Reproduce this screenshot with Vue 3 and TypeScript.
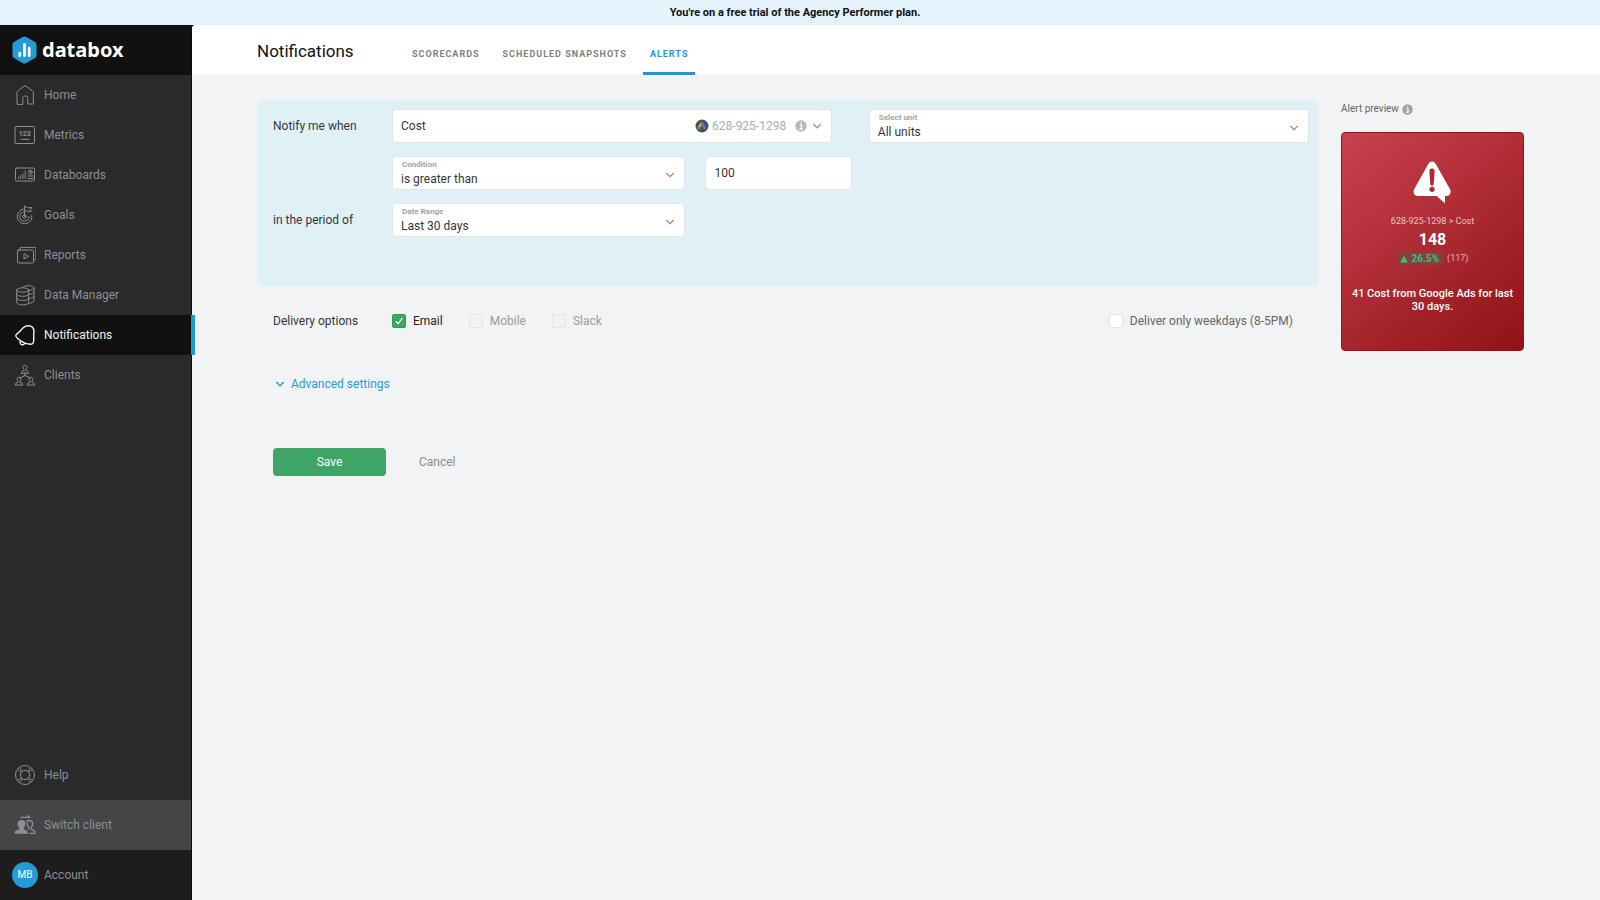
<script setup lang="ts">
import { ref } from 'vue'

interface NavItem {
  label: string
  icon: string
  active?: boolean
}

const navItems: NavItem[] = [
  { label: 'Home', icon: 'home' },
  { label: 'Metrics', icon: 'metrics' },
  { label: 'Databoards', icon: 'databoards' },
  { label: 'Goals', icon: 'goals' },
  { label: 'Reports', icon: 'reports' },
  { label: 'Data Manager', icon: 'data' },
  { label: 'Notifications', icon: 'bell', active: true },
  { label: 'Clients', icon: 'clients' },
]

const tabs = ['Scorecards', 'Scheduled snapshots', 'Alerts']
const activeTab = ref('Alerts')

const metric = ref('Cost')
const unit = ref('All units')
const condition = ref('is greater than')
const threshold = ref('100')
const range = ref('Last 30 days')
const weekdaysOnly = ref(false)

const channels = ref([
  { label: 'Email', checked: true, disabled: false },
  { label: 'Mobile', checked: false, disabled: true },
  { label: 'Slack', checked: false, disabled: true },
])
</script>

<template>
  <div class="app">
    <div class="banner">You're on a free trial of the Agency Performer plan.</div>

    <div class="shell">
      <aside class="sidebar">
        <a href="#" class="brand">
          <svg class="brand-mark" viewBox="0 0 26 28">
            <path d="M11.2 .9a3.6 3.6 0 0 1 3.6 0l8.7 5a3 3 0 0 1 1.5 2.6v11a3 3 0 0 1-1.5 2.6l-8.7 5a3.6 3.6 0 0 1-3.6 0l-8.7-5A3 3 0 0 1 1 19.5v-11a3 3 0 0 1 1.5-2.6z" fill="#259bd7" />
            <path d="M8.3 17v2.7M13 8.3v11.4M17.7 12v7.7" stroke="#fff" stroke-width="2.7" stroke-linecap="round" />
          </svg>
          <span>databox</span>
        </a>

        <nav class="nav">
          <a v-for="item in navItems" :key="item.label" href="#" class="nav-item" :class="{ active: item.active }">
            <svg class="icon" viewBox="0 0 22 22">
              <template v-if="item.icon === 'home'">
                <path d="M3 20V8.5a2 2 0 0 1 .7-1.500L10 2.2a1.6 1.6 0 0 1 2 0l6.500 4.800a2 2 0 0 1 .8 1.600V20h-5.500v-6.500a2 2 0 0 0-2-1.500h-1a2 2 0 0 0-2 1.500V20z" />
              </template>
              <template v-else-if="item.icon === 'metrics'">
                <rect x="1" y="2.5" width="19.5" height="17" rx="1.2" />
                <path d="M7 15.3h8" />
                <text x="10.7" y="12" text-anchor="middle" class="glyph">123</text>
              </template>
              <template v-else-if="item.icon === 'databoards'">
                <rect x="1.5" y="4" width="19" height="13" rx="1.2" />
                <path d="M4.5 14.5v-1.5M6.7 14.5v-3M8.9 14.5V10M11.2 14.5V7M14 12h5M14 14.5h5" />
                <circle cx="16.3" cy="8.3" r="2" /><path d="M16.3 6.3v2h2" />
              </template>
              <template v-else-if="item.icon === 'goals'">
                <path d="M9.5 5.1a7.4 7.4 0 1 0 8.4 6" />
                <path d="M9.5 8a4.6 4.6 0 1 0 5.5 4.5" />
                <circle cx="10.5" cy="12.5" r="1.8" />
                <path d="M10.5 12.5V2l3 1.8 4.5-.3-1.8 2 1.3 1.8-4 .2-3-1.5" />
              </template>
              <template v-else-if="item.icon === 'reports'">
                <rect x="3.5" y="6" width="16" height="13" rx="1" />
                <path d="M6 6V4.2a.8.8 0 0 1 .8-.8H21a.9.9 0 0 1 .9.9V15a.9.9 0 0 1-.9.9h-1.3M10 10v4.8l4.2-2.4z" />
              </template>
              <template v-else-if="item.icon === 'data'">
                <ellipse cx="8.7" cy="6" rx="6" ry="2.2" />
                <path d="M2.7 6v12.5c0 1.4 2.7 2.4 6 2.4s6-1 6-2.4V6M2.7 10c0 1.4 2.7 2.3 6 2.3s6-.9 6-2.3M2.7 14.2c0 1.4 2.7 2.3 6 2.3s6-.9 6-2.3" />
                <path d="M8.5 3.7c.5-1.2 2.8-2 5.5-2 3.3 0 6 1 6 2.3 0 1.3-2.3 2.2-5.3 2.3M20 4v13c0 1-2 2-5 2.3M14.7 10.3c3-.2 5.3-1 5.3-2.3M14.7 14.5c3-.2 5.3-1 5.3-2.3" />
              </template>
              <template v-else-if="item.icon === 'bell'">
                <path stroke-width="1.4" d="M9.2 3.8c2.2-2.6 7-2.8 9.3-.6 1.6 1.6 1.7 3.8 1.3 6.3-.4 3 .2 5.5-.2 8.2-.2 2-1.5 2.5-3.2 2.5-3-.1-6.2-.8-9.5-3-2.1-1.4-4-3.2-4.9-4.7-.6-1.2-.2-1.9.9-2.7 3-2 4-4 6.3-6zM6.3 17.4c-.6 1.9.3 3.2 1.9 3.4 1.2.1 2-.4 2.6-1.6" />
              </template>
              <template v-else>
                <path d="M11 8.5v3M5.5 14l5.5-2.5 5.5 2.5M7.3 9c.1-1.6.9-2 2.7-2.3V5.5C8.3 3 9.3 1.3 11 1.3s2.7 1.7 1 4.2v1.2c1.8.3 2.6.7 2.7 2.3z" />
                <path d="M1.3 20.7c.1-1.6.9-2 2.7-2.3v-1.2c-1.7-2.5-.7-3.9 1-3.9s2.7 1.4 1 3.9v1.2c1.8.3 2.6.7 2.7 2.3zM13.3 20.7c.1-1.6.9-2 2.7-2.3v-1.2c-1.7-2.5-.7-3.9 1-3.9s2.7 1.4 1 3.9v1.2c1.8.3 2.6.7 2.7 2.3z" />
              </template>
            </svg>
            <span>{{ item.label }}</span>
          </a>
        </nav>

        <a href="#" class="nav-item help">
          <svg class="icon" viewBox="0 0 22 22">
            <circle cx="11" cy="11" r="9.5" /><circle cx="11" cy="11" r="4.6" />
            <path d="M3.3 5.3l4 3M5.3 3.3l3 4M18.7 5.3l-4 3M16.7 3.3l-3 4M3.3 16.7l4-3M5.3 18.7l3-4M18.7 16.7l-4-3M16.7 18.7l-3-4" />
          </svg>
          <span>Help</span>
        </a>
        <a href="#" class="nav-item switch">
          <svg class="icon" viewBox="0 0 22 22">
            <path class="solid" d="M.8 19.8v-1.3c0-1.8 1.7-2.3 4.5-3.2v-1.5C2.8 11 2.8 6 7.500 6s4.700 5 2.300 7.800v1.500c2.700.9 3.900 1.400 3.900 3.200v1.300z" />
            <path stroke-width="1.3" d="M13 7.500c1.200-1.600 5.700-1.500 5.700 2.200 0 1.900-.7 3-1.500 4v1.600c2.700.9 3.800 1.300 3.800 3v1.100h-5.200M13 8.800c.2 2.300.7 3.700 1.700 4.900v1.500M7 3.300h8.500M13.500 1.700l2.200 1.600" />
          </svg>
          <span>Switch client</span>
        </a>
        <a href="#" class="nav-item account">
          <span class="avatar">MB</span>
          <span>Account</span>
        </a>
      </aside>

      <main class="main">
        <header class="topbar">
          <h1>Notifications</h1>
          <nav class="tabs">
            <a v-for="tab in tabs" :key="tab" href="#" class="tab" :class="{ active: tab === activeTab }" @click.prevent="activeTab = tab">{{ tab }}</a>
          </nav>
        </header>

        <div class="content">
          <form class="editor" @submit.prevent>
            <section class="rules">
              <div class="row">
                <label class="row-label" for="metric">Notify me when</label>
                <div class="fields">
                  <div class="field wide plain">
                    <select id="metric" v-model="metric"><option>Cost</option></select>
                    <span class="source">
                      <svg class="ads" viewBox="0 0 14 14">
                        <circle cx="7" cy="7" r="6.5" fill="#4c5158" />
                        <path d="M6.3 4.2l-2.5 4.5" stroke="#f4b811" stroke-width="2.3" stroke-linecap="round" />
                        <path d="M7 4.2l2.6 4.7" stroke="#3f7de8" stroke-width="2.8" stroke-linecap="round" />
                        <circle cx="4.1" cy="9" r="1.5" fill="#35a853" />
                      </svg>
                      <span class="source-id">628-925-1298</span>
                      <svg class="info" viewBox="0 0 12 12"><circle cx="6" cy="6" r="5.7" fill="#b8b8b8" /><path d="M4.8 5.2h1.7v3.7M4.5 9h3.2M5.5 2.9h1.2" stroke="#fff" stroke-width="1.3" fill="none" /></svg>
                      <svg class="chevron" viewBox="0 0 10 10"><path d="M1.3 3l3.7 3.8L8.7 3" /></svg>
                    </span>
                  </div>
                  <div class="field wide push">
                    <label for="unit">Select unit</label>
                    <select id="unit" v-model="unit"><option>All units</option></select>
                    <svg class="chevron" viewBox="0 0 10 10"><path d="M1.3 3l3.7 3.8L8.7 3" /></svg>
                  </div>
                </div>
              </div>
              <div class="row">
                <span class="row-label"></span>
                <div class="fields">
                  <div class="field medium">
                    <label for="condition">Condition</label>
                    <select id="condition" v-model="condition"><option>is greater than</option></select>
                    <svg class="chevron" viewBox="0 0 10 10"><path d="M1.3 3l3.7 3.8L8.7 3" /></svg>
                  </div>
                  <div class="field small plain">
                    <input v-model="threshold" type="text" aria-label="Value" />
                  </div>
                </div>
              </div>
              <div class="row">
                <label class="row-label" for="range">in the period of</label>
                <div class="fields">
                  <div class="field medium">
                    <label for="range">Date Range</label>
                    <select id="range" v-model="range"><option>Last 30 days</option></select>
                    <svg class="chevron" viewBox="0 0 10 10"><path d="M1.3 3l3.7 3.8L8.7 3" /></svg>
                  </div>
                </div>
              </div>
            </section>

            <div class="delivery">
              <span class="row-label">Delivery options</span>
              <label v-for="c in channels" :key="c.label" class="check" :class="{ off: c.disabled }">
                <span class="box">
                  <input v-model="c.checked" type="checkbox" :disabled="c.disabled" />
                  <svg v-if="c.checked" viewBox="0 0 14 14"><path d="M3.8 7.3l2.3 2.5 4.3-5.6" /></svg>
                </span>
                {{ c.label }}
              </label>
              <label class="check weekdays">
                <span class="box">
                  <input v-model="weekdaysOnly" type="checkbox" />
                  <svg v-if="weekdaysOnly" viewBox="0 0 14 14"><path d="M3.8 7.3l2.3 2.5 4.3-5.6" /></svg>
                </span>
                Deliver only weekdays (8-5PM)
              </label>
            </div>

            <button type="button" class="advanced">
              <svg class="chevron" viewBox="0 0 10 10"><path d="M1.3 3l3.7 3.8L8.7 3" /></svg>
              Advanced settings
            </button>

            <div class="actions">
              <button type="submit" class="save">Save</button>
              <button type="button" class="cancel">Cancel</button>
            </div>
          </form>

          <aside class="preview">
            <div class="preview-title">
              Alert preview
              <svg class="info" viewBox="0 0 12 12"><circle cx="6" cy="6" r="5.7" fill="#a2a2a3" /><path d="M4.8 5.2h1.7v3.7M4.5 9h3.2M5.5 2.9h1.2" stroke="#fff" stroke-width="1.3" fill="none" /></svg>
            </div>
            <div class="card">
              <svg class="warning" viewBox="0 0 40 44">
                <path d="M15.8 3.3a4.200 4.200 0 0 1 7.400 0L38 29.500c1.700 3-.2 6.800-3.500 6.800h-1.700V44l-8.500-7.700H4.700C1.400 36.300-.5 32.500 1.200 29.500z" fill="#fff" />
                <path d="M16.800 10.800a2.700 2.700 0 0 1 5.400 0l-.9 13.200a1.800 1.800 0 0 1-3.600 0z" fill="#ae2a33" />
                <circle cx="19.5" cy="29.5" r="2.700" fill="#ae2a33" />
              </svg>
              <div class="metric-name">628-925-1298 &gt; Cost</div>
              <div class="metric-value">148</div>
              <div class="trend">
                <span class="delta"><svg viewBox="0 0 8 8"><path d="M4 .5L7.7 7.5H.3z" /></svg>26.5%</span>
                <span class="previous">(117)</span>
              </div>
              <p>41 Cost from Google Ads for last 30 days.</p>
            </div>
          </aside>
        </div>
      </main>
    </div>
  </div>
</template>

<style>
body {
  margin: 0;
  background: #f2f3f5;
}
</style>

<style scoped>
.app {
  display: flex;
  flex-direction: column;
  min-height: 100vh;
  font: 12px/16px Roboto, "Liberation Sans", sans-serif;
  color: #333639;
  background: #f2f3f5;
}
.app *,
.app *::before {
  box-sizing: border-box;
}
a {
  color: inherit;
  text-decoration: none;
}
button,
input,
select {
  margin: 0;
  font: inherit;
  color: inherit;
  border: 0;
  background: none;
}
button {
  cursor: pointer;
}
svg {
  flex: none;
}
.banner {
  height: 25px;
  padding-right: 10px;
  background: #e4f3fb;
  color: #111;
  font-size: 11px;
  font-weight: 700;
  line-height: 25px;
  text-align: center;
}
.shell {
  display: flex;
  flex: 1;
  background: #111;
}

.sidebar {
  display: flex;
  flex-direction: column;
  flex: none;
  width: 192px;
  background: #2a2a2a;
  border-right: 1px solid #0b0b0b;
  color: #8c8f96;
}
.brand {
  display: flex;
  align-items: center;
  gap: 4px;
  height: 50px;
  padding-left: 11px;
  background: #111;
  color: #fff;
  font: 700 20px/24px "Noto Sans", sans-serif;
}
.brand-mark {
  width: 27px;
  height: 28px;
}
.nav {
  flex: 1;
}
.nav-item {
  display: flex;
  align-items: center;
  gap: 8px;
  height: 40px;
  padding-left: 14px;
}
.nav-item.active {
  width: 195px;
  position: relative;
  background: #111;
  border-right: 4px solid #1b98d8;
  color: #f2f2f2;
}
.icon {
  width: 22px;
  height: 22px;
  fill: none;
  stroke: currentColor;
  stroke-width: 1;
  stroke-linejoin: round;
  stroke-linecap: round;
}
.glyph {
  fill: currentColor;
  stroke: none;
  font-size: 7px;
  font-weight: 700;
}
.solid {
  fill: currentColor;
  stroke: none;
}
.help {
  margin-bottom: 5px;
}
.switch {
  height: 50px;
  background: #444547;
}
.account {
  height: 50px;
  gap: 6px;
  padding-left: 12px;
  background: #1d1d1d;
}
.avatar {
  width: 26px;
  height: 26px;
  border-radius: 50%;
  background: #259bd7;
  color: #fff;
  font-size: 10px;
  line-height: 26px;
  text-align: center;
}

.main {
  flex: 1;
  min-width: 0;
  background: #f2f3f5;
  border-top-left-radius: 4px;
}
.topbar {
  display: flex;
  height: 50px;
  padding-left: 65px;
  background: #fff;
  border-top-left-radius: 4px;
}
h1 {
  width: 140px;
  margin: 0;
  color: #111;
  font-size: 17px;
  font-weight: 400;
  line-height: 53px;
  white-space: nowrap;
}
.tabs {
  display: flex;
  gap: 9px;
  padding-left: 8px;
}
.tab {
  height: 50px;
  padding: 0 7px;
  border-bottom: 3px solid transparent;
  color: #808080;
  font-size: 9px;
  font-weight: 700;
  line-height: 58px;
  letter-spacing: 1px;
  text-transform: uppercase;
}
.tab.active {
  color: #1b98d8;
  border-color: #1b98d8;
}

.content {
  display: flex;
  gap: 23px;
  padding: 25px 76px 40px 65px;
}
.editor {
  flex: 1;
  min-width: 0;
}
.rules {
  display: flex;
  flex-direction: column;
  gap: 13px;
  padding: 9px 9px 49px 16px;
  border-radius: 4px;
  background: #e0f1f6;
}
.row {
  display: flex;
  align-items: center;
}
.row-label {
  flex: none;
  width: 119px;
}
.fields {
  display: flex;
  flex: 1;
  gap: 20px;
}
.field {
  display: grid;
  grid-template: 32px / 1fr;
  overflow: hidden;
  border: 1px solid #e3e6e8;
  border-radius: 4px;
  background: #fff;
  height: 34px;
}
.field > * {
  grid-area: 1 / 1;
}
.wide {
  width: 48%;
}
.push {
  margin-left: auto;
}
.medium {
  width: 32%;
}
.small {
  width: 16%;
}
.field label {
  padding: 3px 9px;
  color: #a3a3a3;
  font-size: 8px;
  font-weight: 700;
  line-height: 10px;
  pointer-events: none;
}
.field select,
.field input {
  width: 100%;
  height: 32px;
  padding: 12px 8px 0;
  appearance: none;
  outline: none;
}
.field.plain select,
.field.plain input {
  padding: 0 9px 0 8px;
}
.chevron {
  width: 10px;
  height: 10px;
  fill: none;
  stroke: #999;
  stroke-width: 1.4;
}
.field > .chevron {
  align-self: center;
  justify-self: end;
  margin-right: 9px;
  margin-top: 3px;
  pointer-events: none;
}
.source {
  display: flex;
  align-items: center;
  align-self: start;
  justify-self: end;
  height: 32px;
  padding-right: 9px;
  color: #adadad;
  pointer-events: none;
}
.ads {
  width: 14px;
  height: 14px;
}
.source-id {
  margin: 0 9px 0 3px;
}
.info {
  width: 12px;
  height: 12px;
}
.source .chevron {
  margin-left: 5px;
}

.delivery {
  display: flex;
  align-items: center;
  padding: 27px 25px 0 16px;
}
.check {
  display: flex;
  align-items: center;
  gap: 7px;
  margin-right: 26px;
  color: #222;
}
.check.off {
  color: #9b9c9e;
}
.check.weekdays {
  margin: 0 0 0 auto;
  color: #666;
}
.box {
  display: grid;
  width: 14px;
  height: 14px;
}
.box > * {
  grid-area: 1 / 1;
}
.box input {
  width: 14px;
  height: 14px;
  appearance: none;
  border: 1px solid #e4e4e2;
  border-radius: 2px;
  background: #fff;
}
.box input:disabled {
  background: #f1f2f1;
}
.box input:checked {
  border-color: #22a455;
  background: #3ea567;
}
.box svg {
  width: 14px;
  height: 14px;
  fill: none;
  stroke: #fff;
  stroke-width: 1.3;
  pointer-events: none;
}
.advanced {
  display: flex;
  align-items: center;
  gap: 6px;
  margin: 47px 0 0 18px;
  padding: 0;
  color: #259bd7;
}
.advanced .chevron {
  stroke: #259bd7;
}
.actions {
  display: flex;
  gap: 33px;
  margin: 56px 0 0 16px;
}
.save {
  width: 113px;
  height: 28px;
  border-radius: 4px;
  background: #3ea567;
  color: #fff;
}
.cancel {
  padding: 0;
  color: #8a8b8d;
}

.preview {
  flex: none;
  width: 183px;
}
.preview-title {
  display: flex;
  align-items: center;
  gap: 3px;
  height: 18px;
  margin-bottom: 14px;
  color: #666;
  font-size: 10px;
}
.preview-title .info {
  width: 11px;
  height: 11px;
}
.card {
  display: flex;
  flex-direction: column;
  align-items: center;
  min-height: 219px;
  padding: 27px 8px 20px;
  border: 1px solid #a8081c;
  border-radius: 4px;
  background: linear-gradient(140deg, #c9424f, #901216);
  color: #fff;
}
.warning {
  width: 39px;
  height: 44px;
}
.metric-name {
  margin-top: 10px;
  font-size: 9px;
  line-height: 14px;
  color: #edc2c5;
}
.metric-value {
  font-size: 16px;
  font-weight: 700;
  line-height: 24px;
}
.trend {
  display: flex;
  align-items: center;
  gap: 4px;
  font-size: 9px;
  line-height: 13px;
}
.delta {
  display: flex;
  align-items: center;
  gap: 4px;
  padding: 0 4px 0 3px;
  border-radius: 1px;
  background: #85403f;
  color: #37c275;
  font-size: 10px;
  font-weight: 700;
}
.delta svg {
  width: 8px;
  height: 8px;
  fill: currentColor;
}
.previous {
  color: #e6b4b7;
}
.card p {
  margin: 22px 0 0;
  font-size: 11px;
  font-weight: 500;
  line-height: 13px;
  text-align: center;
}
</style>
